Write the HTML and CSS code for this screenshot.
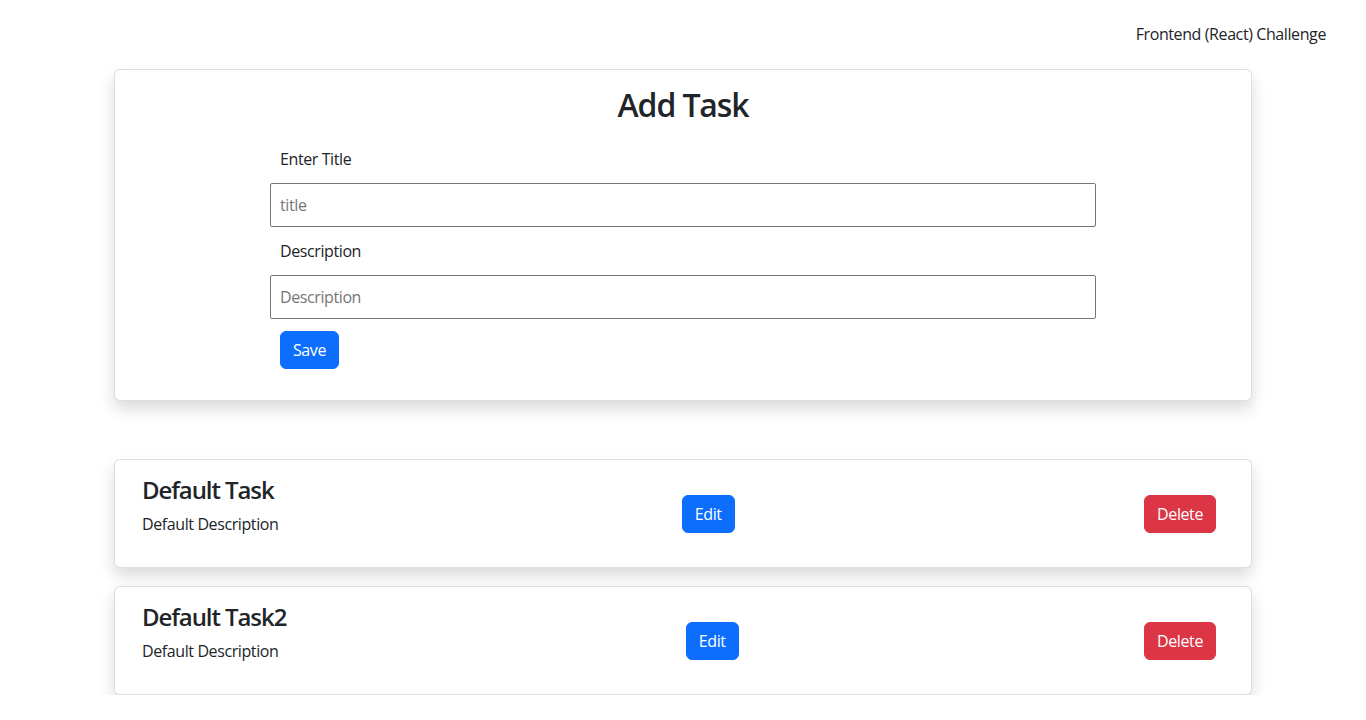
FILE: index.html
```html
<!DOCTYPE html>
<html lang="en">
<head>
<meta charset="utf-8">
<title>Frontend (React) Challenge</title>
<link rel="stylesheet" href="styles.css">
</head>
<body>
<header class="topbar">
  <span class="brand">Frontend (React) Challenge</span>
</header>
<main class="page">
  <section class="card add-card">
    <h2 class="add-title">Add Task</h2>
    <form class="task-form">
      <label class="field-label" for="title">Enter Title</label>
      <input class="field-input" id="title" type="text" placeholder="title">
      <label class="field-label" for="desc">Description</label>
      <input class="field-input" id="desc" type="text" placeholder="Description">
      <div class="form-actions"><button type="button" class="btn btn-primary">Save</button></div>
    </form>
  </section>

  <div class="task-list">
    <article class="card task-card">
      <div class="task-text">
        <h4 class="task-title">Default Task</h4>
        <p class="task-desc">Default Description</p>
      </div>
      <button type="button" class="btn btn-primary btn-edit">Edit</button>
      <button type="button" class="btn btn-danger">Delete</button>
    </article>
    <article class="card task-card">
      <div class="task-text">
        <h4 class="task-title">Default Task2</h4>
        <p class="task-desc">Default Description</p>
      </div>
      <button type="button" class="btn btn-primary btn-edit">Edit</button>
      <button type="button" class="btn btn-danger">Delete</button>
    </article>
  </div>
</main>
</body>
</html>
```
FILE: styles.css
```css
* { box-sizing: border-box; }
body {
  margin: 0;
  font-family: "Open Sans", "Noto Sans", sans-serif;
  font-size: 16px;
  line-height: 24px;
  letter-spacing: -0.025em;
  color: #212529;
  background: #fff;
}
.topbar {
  display: flex;
  justify-content: flex-end;
  padding: 22px 40px 0 0;
  height: 46px;
}
.brand { line-height: 24px; }
.page {
  width: 1138px;
  margin: 23px auto 0;
}
.card {
  background: #fff;
  border: 1px solid rgba(0,0,0,0.125);
  border-radius: 6px;
  box-shadow: 0 8px 16px rgba(0,0,0,0.15);
}
.add-card {
  padding: 16px 0 31px;
}
.add-title {
  margin: 0;
  text-align: center;
  font-size: 32px;
  line-height: 38px;
  font-weight: 600;
  letter-spacing: -0.035em;
}
.task-form {
  width: 826px;
  margin: 23px auto 0;
  display: flex;
  flex-direction: column;
  gap: 12px;
}
.field-label {
  display: block;
  padding-left: 10px;
  line-height: 24px;
}
.field-input {
  display: block;
  width: 100%;
  height: 44px;
  border: 1px solid #767676;
  border-radius: 2px;
  padding: 0 9px;
  font: inherit;
  letter-spacing: inherit;
  color: #212529;
  outline: none;
}
.field-input::placeholder { color: #757575; }
.form-actions { padding-left: 10px; display: flex; }
.btn {
  font: inherit;
  letter-spacing: inherit;
  line-height: 24px;
  padding: 6px 12px;
  border: 1px solid transparent;
  border-radius: 6px;
  color: #fff;
  cursor: pointer;
}
.btn-primary { background: #0d6efd; border-color: #0d6efd; }
.btn-danger { background: #dc3545; border-color: #dc3545; }
.task-list {
  margin-top: 58px;
  display: flex;
  flex-direction: column;
  gap: 18px;
}
.task-card {
  display: flex;
  align-items: center;
  justify-content: space-between;
  padding: 15px 35px 15px 27px;
}
.task-title {
  margin: 0 0 8px;
  font-size: 24px;
  line-height: 29px;
  font-weight: 600;
  letter-spacing: -0.045em;
}
.task-desc { margin: 0 0 16px; }
.btn-edit { margin-right: 6px; }
```
